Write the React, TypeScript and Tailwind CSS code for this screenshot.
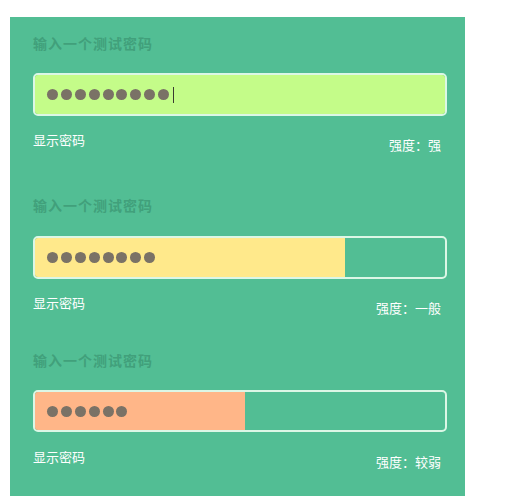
import React from "react";

type Row = {
  dots: number;
  fill: string;
  width: string;
  cursor?: boolean;
  strength: string;
  gapTop: string;
  labelGap: string;
  rowGap: string;
  height: string;
};

const rows: Row[] = [
  { dots: 9, fill: "bg-[#c4fc89]", width: "w-full", cursor: true, strength: "强度：强", gapTop: "mt-0", labelGap: "mb-[20px]", rowGap: "mt-[16px]", height: "h-[43px]" },
  { dots: 8, fill: "bg-[#ffe98b]", width: "w-[310px]", strength: "强度：一般", gapTop: "mt-[42px]", labelGap: "mb-[21px]", rowGap: "mt-[16px]", height: "h-[43px]" },
  { dots: 6, fill: "bg-[#ffb688]", width: "w-[210px]", strength: "强度：较弱", gapTop: "mt-[34px]", labelGap: "mb-[20px]", rowGap: "mt-[17px]", height: "h-[42px]" },
];

function Dots({ count, cursor }: { count: number; cursor?: boolean }) {
  return (
    <div className="flex h-full items-center gap-[2.9px] pl-[12px]">
      {Array.from({ length: count }).map((_, i) => (
        <span key={i} className="h-[11px] w-[11px] shrink-0 rounded-full bg-[#7a7266]" />
      ))}
      {cursor && <span className="ml-[1px] h-[16px] w-px bg-[#3a3a30]" />}
    </div>
  );
}

export default function App() {
  return (
    <div className="min-h-[504px] w-[513px] bg-white pt-[17px] font-['Noto_Sans_CJK_SC','Noto_Sans',sans-serif]">
      <div className="ml-[10px] w-[455px] bg-[#52be94] px-[23px] pb-[26px] pt-[16px]">
        {rows.map((r, idx) => (
          <div key={idx} className={r.gapTop}>
            <div className={`h-[20px] text-[14px] font-bold leading-[20px] tracking-[1px] text-[#41a07b] ${r.labelGap}`}>输入一个测试密码</div>
            <div className={`${r.height} w-[414px] overflow-hidden rounded-[5px] border-2 border-[#dcf7e6]`}>
              <div className={`h-full ${r.width} ${r.fill}`}>
                <Dots count={r.dots} cursor={r.cursor} />
              </div>
            </div>
            <div className={`flex items-start justify-between pr-[1px] ${r.rowGap}`}>
              <span className="text-[13px] leading-[16px] text-white">显示密码</span>
              <span className="pt-[5px] text-[13px] leading-[16px] text-white">{r.strength}</span>
            </div>
          </div>
        ))}
      </div>
    </div>
  );
}
